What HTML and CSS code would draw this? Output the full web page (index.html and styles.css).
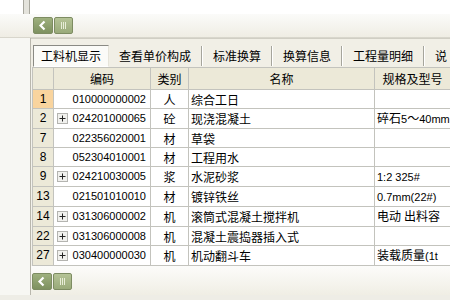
FILE: index.html
```html
<!DOCTYPE html>
<html lang="zh-CN">
<head>
    <meta charset="UTF-8">
    <title>工料机显示</title>
    <link rel="stylesheet" href="styles.css">
</head>
<body>
    <div class="top">
        <div class="vthumb"></div>
    </div>
    <div class="hscroll">
        <div class="sb-btn">
            <svg width="20" height="17" viewBox="0 0 20 17"><path d="M11.5 4.5 L7.5 8.5 L11.5 12.5" fill="none" stroke="#fff" stroke-width="2.2"/></svg>
        </div>
        <div class="sb-thumb">
            <svg width="19" height="17" viewBox="0 0 19 17"><path d="M7.5 5v7M9.5 5v7M11.5 5v7" stroke="#e8edd8" stroke-width="1"/></svg>
        </div>
    </div>

    <div class="main">
        <div class="side"></div>
        <div class="panel">
            <div class="tabs">
                <div class="tab active">工料机显示</div>
                <div class="tab">查看单价构成</div>
                <div class="sep"></div>
                <div class="tab">标准换算</div>
                <div class="sep"></div>
                <div class="tab">换算信息</div>
                <div class="sep"></div>
                <div class="tab">工程量明细</div>
                <div class="sep"></div>
                <div class="tab">说</div>
            </div>

            <table class="grid">
                <colgroup>
                    <col style="width:21px">
                    <col style="width:97px">
                    <col style="width:38px">
                    <col style="width:186px">
                    <col style="width:76px">
                </colgroup>
                <thead>
                    <tr>
                        <th></th>
                        <th>编码</th>
                        <th>类别</th>
                        <th>名称</th>
                        <th>规格及型号</th>
                    </tr>
                </thead>
                <tbody id="rows"></tbody>
            </table>

            <div class="hscroll bottom">
                <div class="sb-btn">
                    <svg width="20" height="17" viewBox="0 0 20 17"><path d="M11.5 4.5 L7.5 8.5 L11.5 12.5" fill="none" stroke="#fff" stroke-width="2.2"/></svg>
                </div>
                <div class="sb-thumb">
                    <svg width="19" height="17" viewBox="0 0 19 17"><path d="M7.5 5v7M9.5 5v7M11.5 5v7" stroke="#e8edd8" stroke-width="1"/></svg>
                </div>
            </div>
        </div>
    </div>
    <div class="foot"></div>

    <script>
        // 工料机列表
        const items = [
            { no: 1,  code: '010000000002', plus: false, type: '人', name: '综合工日', spec: '' },
            { no: 2,  code: '024201000065', plus: true,  type: '砼', name: '现浇混凝土', spec: '碎石5～40mm' },
            { no: 7,  code: '022356020001', plus: false, type: '材', name: '草袋', spec: '' },
            { no: 8,  code: '052304010001', plus: false, type: '材', name: '工程用水', spec: '' },
            { no: 9,  code: '024210030005', plus: true,  type: '浆', name: '水泥砂浆', spec: '1:2 325#' },
            { no: 13, code: '021501010010', plus: false, type: '材', name: '镀锌铁丝', spec: '0.7mm(22#)' },
            { no: 14, code: '031306000002', plus: true,  type: '机', name: '滚筒式混凝土搅拌机', spec: '电动 出料容' },
            { no: 22, code: '031306000008', plus: true,  type: '机', name: '混凝土震捣器插入式', spec: '' },
            { no: 27, code: '030400000030', plus: true,  type: '机', name: '机动翻斗车', spec: '装载质量(1t' }
        ]

        const plusSvg = '<svg class="plus" width="11" height="11" viewBox="0 0 11 11">' +
            '<rect x="0.5" y="0.5" width="10" height="10" fill="#f1f1ee" stroke="#b4b4b0"/>' +
            '<path d="M2.5 5.5h6M5.5 2.5v6" stroke="#222" stroke-width="1"/></svg>'

        // 半角字符用窄字体
        const half = s => s.replace(/[\x20-\x7e]+/g, m => `<span class="lat">${m}</span>`)

        const tbody = document.getElementById('rows')
        items.forEach((it, i) => {
            const tr = document.createElement('tr')
            tr.innerHTML =
                `<td class="num${i === 0 ? ' current' : ''}">${it.no}</td>` +
                `<td class="code">${it.plus ? plusSvg : ''}<span>${it.code}</span></td>` +
                `<td class="type">${it.type}</td>` +
                `<td class="name">${it.name}</td>` +
                `<td class="spec">${half(it.spec)}</td>`
            tbody.appendChild(tr)
        })
    </script>
</body>
</html>
```

FILE: styles.css
```css
* {
    box-sizing: border-box;
    margin: 0;
    padding: 0;
}

body {
    width: 450px;
    height: 300px;
    overflow: hidden;
    background: #fdfdfb;
    font-family: "Noto Sans CJK SC", "Liberation Sans", sans-serif;
    font-size: 12px;
    color: #000;
}

.top {
    height: 14px;
    background: #fff;
    padding-left: 23px;
}

.vthumb {
    width: 7px;
    height: 14px;
    background: #e4e3dc;
    border-left: 1px solid #a8a79e;
    border-right: 1px solid #a8a79e;
}

.hscroll {
    height: 24px;
    display: flex;
    align-items: center;
    padding-left: 33px;
    background: linear-gradient(#fbfbf9, #efede4);
    border-bottom: 1px solid #d8d6cc;
}

.sb-btn,
.sb-thumb {
    height: 17px;
    border: 1px solid #7d8c62;
    border-radius: 2px;
}

.sb-btn {
    width: 20px;
    background: linear-gradient(#9eb07e, #7e9160);
}

.sb-thumb {
    width: 19px;
    margin-left: 1px;
    background: linear-gradient(#b5c396, #99aa7a);
}

.sb-btn svg,
.sb-thumb svg {
    display: block;
    margin: -1px;
}

.main {
    display: flex;
    height: 257px;
}

.side {
    width: 30px;
    background: #f7f7f3;
}

.panel {
    flex: 1;
    min-width: 0;
    border-left: 1px solid #b9b7ad;
    background: #f3f2ec;
    overflow: hidden;
}

.tabs {
    height: 29px;
    display: flex;
    align-items: center;
    white-space: nowrap;
    padding-top: 6px;
    padding-left: 2px;
    background: #f1efe6;
    border-top: 1px solid #d0cec4;
}

.tab {
    padding: 0 10px;
    line-height: 20px;
}

.tab.active {
    padding: 0 7px;
    background: #fbfbf8;
    border: 1px solid #fff;
    border-top-color: #8a8a84;
    border-left-color: #8a8a84;
    border-right-color: #e6e4da;
    height: 22px;
    line-height: 20px;
}

.sep {
    width: 2px;
    height: 20px;
    border-left: 1px solid #a6a59c;
    border-right: 1px solid #fff;
    flex: none;
}

.grid {
    margin-left: 1px;
    border-collapse: collapse;
    table-layout: fixed;
    width: 418px;
    background: #fff;
    white-space: nowrap;
}

.grid th,
.grid td {
    border: 1px solid #c3c3bd;
    overflow: hidden;
    padding: 0;
}

.grid th {
    height: 22px;
    background: #ece9d8;
    font-weight: normal;
    text-align: center;
}

.grid td {
    height: 19px;
    line-height: 17px;
}

.grid td.num {
    background: #ece9d8;
    text-align: center;
    font-family: "Liberation Sans", sans-serif;
}

.grid td.num.current {
    background: #f9d49e;
}

.grid td.code {
    text-align: right;
    padding-right: 4px;
    position: relative;
    font-family: "Liberation Sans", sans-serif;
    font-size: 11px;
}

.grid .plus {
    position: absolute;
    left: 3px;
    top: 4px;
}

.grid td.type {
    text-align: center;
}

.grid td.name,
.grid td.spec {
    padding-left: 2px;
}

.grid .lat {
    font-family: "Liberation Sans", sans-serif;
    font-size: 11px;
}

.hscroll.bottom {
    height: 32px;
    padding-left: 1px;
    background: linear-gradient(#fcfcfa, #efede3);
    border-bottom: 1px solid #c6c4b8;
}

.foot {
    height: 5px;
    background: #eeede6;
}
```
